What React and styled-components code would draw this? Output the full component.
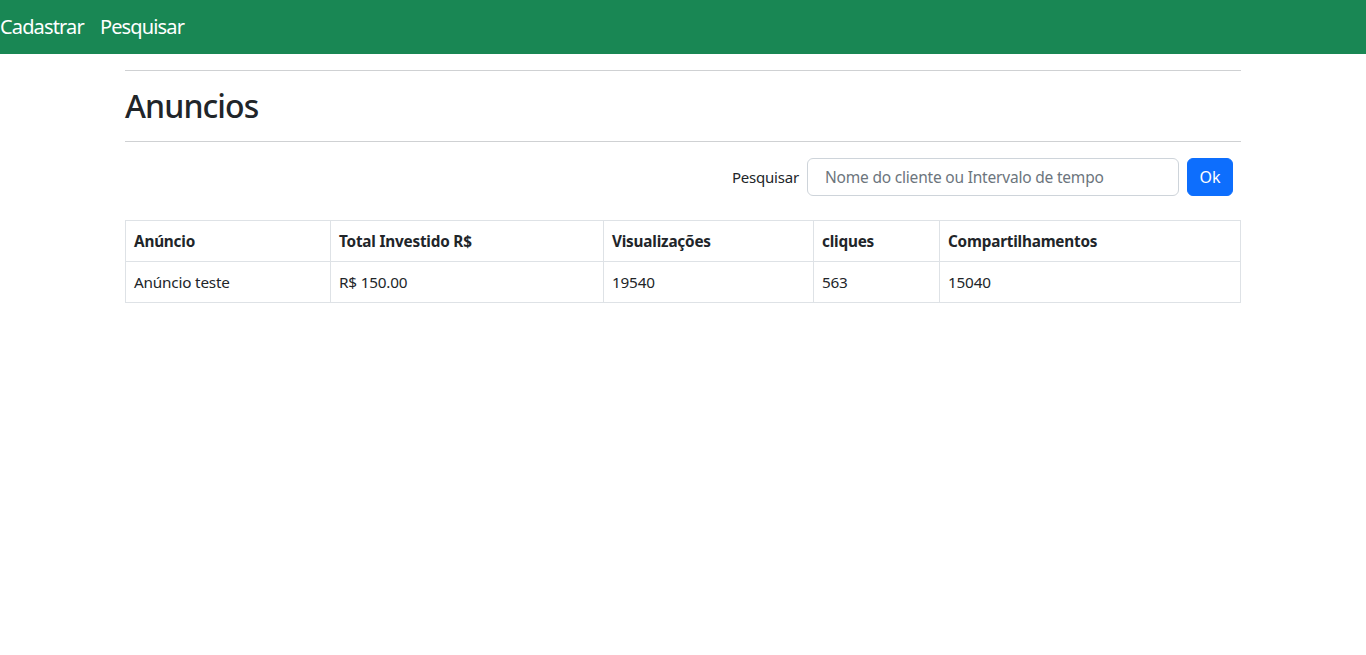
import React from "react";
import styled, { createGlobalStyle } from "styled-components";

const Global = createGlobalStyle`
  *, *::before, *::after { box-sizing: border-box; }
  body {
    margin: 0;
    font-family: "Noto Sans", "Open Sans", sans-serif;
    font-size: 16px;
    line-height: 1.5;
    color: #212529;
    background: #fff;
  }
`;

const Navbar = styled.nav`
  height: 54px;
  background: #198754;
  display: flex;
  align-items: center;
  gap: 16px;
`;

const NavLink = styled.a`
  color: #fff;
  font-size: 20px;
  line-height: 30px;
  text-decoration: none;
  letter-spacing: -0.85px;
`;

const Container = styled.main`
  width: 1140px;
  margin: 0 auto;
  padding: 0 12px;
`;

const Rule = styled.hr`
  margin: 16px 0;
  border: 0;
  border-top: 1px solid #cfd1d3;
  height: 0;
`;

const Title = styled.h2`
  margin: 0 0 8px;
  font-size: 32px;
  font-weight: 500;
  line-height: 38.4px;
  letter-spacing: -0.9px;
`;

const SearchForm = styled.form`
  display: flex;
  justify-content: flex-end;
  align-items: center;
  gap: 8px;
  padding-right: 8px;
  margin-bottom: 24px;
`;

const Label = styled.label`
  font-size: 15px;
  letter-spacing: -0.2px;
`;

const Input = styled.input`
  width: 372px;
  height: 38px;
  padding: 6px 17px;
  font: inherit;
  font-size: 15.5px;
  color: #212529;
  border: 1px solid #ced4da;
  border-radius: 6px;
  letter-spacing: -0.2px;
  &::placeholder { color: #6c757d; }
`;

const Button = styled.button`
  width: 46px;
  height: 38px;
  border: 1px solid #0d6efd;
  background: #0d6efd;
  color: #fff;
  font: inherit;
  border-radius: 6px;
  padding: 0;
`;

const Table = styled.table`
  width: 1115px;
  border-collapse: collapse;
  table-layout: fixed;
`;

const Th = styled.th`
  text-align: left;
  font-weight: 700;
  font-size: 15.3px;
  letter-spacing: -0.2px;
  padding: 8px;
  border: 1px solid #dee2e6;
  line-height: 24px;
`;

const Td = styled.td`
  padding: 8px;
  border: 1px solid #dee2e6;
  line-height: 24px;
  font-size: 15.3px;
  letter-spacing: -0.2px;
`;

const widths = [205, 273, 210, 126, 301];
const headers = ["Anúncio", "Total Investido R$", "Visualizações", "cliques", "Compartilhamentos"];
const rows = [["Anúncio teste", "R$ 150.00", "19540", "563", "15040"]];

export default function App() {
  return (
    <>
      <Global />
      <Navbar>
        <NavLink href="#">Cadastrar</NavLink>
        <NavLink href="#">Pesquisar</NavLink>
      </Navbar>
      <Container>
        <Rule />
        <Title>Anuncios</Title>
        <Rule />
        <SearchForm onSubmit={(e) => e.preventDefault()}>
          <Label htmlFor="q">Pesquisar</Label>
          <Input id="q" placeholder="Nome do cliente ou Intervalo de tempo" />
          <Button type="submit">Ok</Button>
        </SearchForm>
        <Table>
          <colgroup>
            {widths.map((w, i) => (
              <col key={i} style={{ width: w }} />
            ))}
          </colgroup>
          <thead>
            <tr>
              {headers.map((h) => (
                <Th key={h}>{h}</Th>
              ))}
            </tr>
          </thead>
          <tbody>
            {rows.map((r, i) => (
              <tr key={i}>
                {r.map((c, j) => (
                  <Td key={j}>{c}</Td>
                ))}
              </tr>
            ))}
          </tbody>
        </Table>
      </Container>
    </>
  );
}
